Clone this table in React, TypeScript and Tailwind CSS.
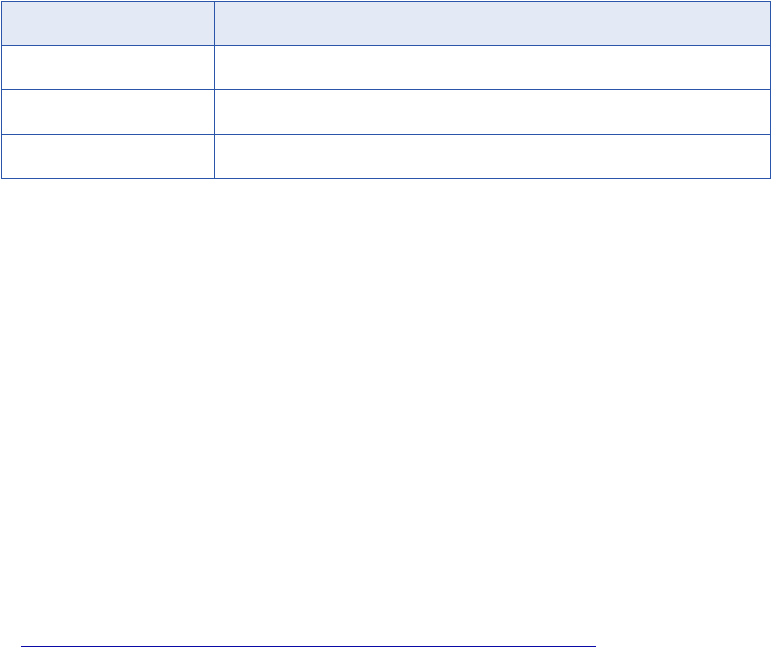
import React from "react";

const rows = [
  { h: "h-[44px]", bg: "bg-[#e4eaf5]" },
  { h: "h-[44px]", bg: "bg-white" },
  { h: "h-[45px]", bg: "bg-white" },
  { h: "h-[44px]", bg: "bg-white" },
];

const App = () => {
  return (
    <div className="min-h-screen bg-white pt-px pl-px font-['Liberation_Sans',sans-serif]">
      <div className="w-[770px] border-l border-t border-[#2a55a8]">
        {rows.map((row, i) => (
          <div key={i} className={`grid grid-cols-[213px_1fr] ${row.h} ${row.bg}`}>
            <div className="border-r border-b border-[#2a55a8]" />
            <div className="border-r border-b border-[#2a55a8]" />
          </div>
        ))}
      </div>
      <div className="mt-[467px] ml-[20px] w-[575px] h-px bg-[#0a0aa8]" />
    </div>
  );
};

export default App;
